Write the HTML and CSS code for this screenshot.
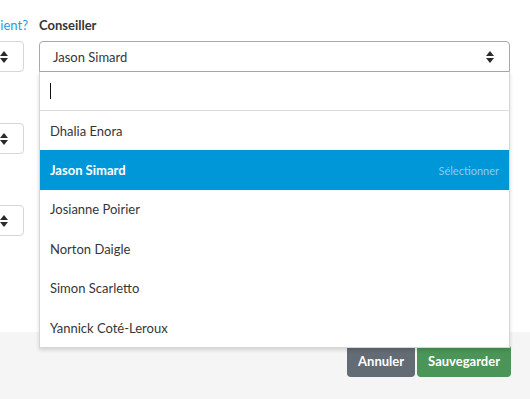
FILE: index.html
```html
<!DOCTYPE html>
<html lang="fr">
<head>
    <meta charset="UTF-8">
    <meta name="viewport" content="width=device-width, initial-scale=1.0">
    <title>Modifier le dossier</title>
    <link rel="stylesheet" href="styles.css">
</head>
<body>
    <div class="modal">
        <div class="modal-body">
            <div class="col col-left">
                <div class="field">
                    <label class="label label-link">Référé par un client?</label>
                    <div class="select"><span class="select-value"></span><span class="sort-icon"></span></div>
                </div>
                <div class="field">
                    <label class="label">&nbsp;</label>
                    <div class="select"><span class="select-value"></span><span class="sort-icon"></span></div>
                </div>
                <div class="field">
                    <label class="label">&nbsp;</label>
                    <div class="select"><span class="select-value"></span><span class="sort-icon"></span></div>
                </div>
            </div>

            <div class="col col-right">
                <div class="field">
                    <label class="label">Conseiller</label>
                    <div class="select select-open">
                        <span class="select-value">Jason Simard</span>
                        <span class="sort-icon"></span>
                        <div class="dropdown">
                            <div class="dropdown-search"><span class="caret"></span></div>
                            <ul class="options">
                                <li class="option">Dhalia Enora</li>
                                <li class="option highlighted">Jason Simard <span class="hint">Sélectionner</span></li>
                                <li class="option">Josianne Poirier</li>
                                <li class="option">Norton Daigle</li>
                                <li class="option">Simon Scarletto</li>
                                <li class="option">Yannick Coté-Leroux</li>
                            </ul>
                        </div>
                    </div>
                </div>
            </div>
        </div>

        <div class="modal-footer">
            <button class="btn btn-cancel">Annuler</button>
            <button class="btn btn-save">Sauvegarder</button>
        </div>
    </div>
</body>
</html>
```

FILE: styles.css
```css
body {
    margin: 0;
    font-family: Lato, "Open Sans", Arial, sans-serif;
    font-size: 13px;
    color: #363636;
    background-color: white;
    overflow: hidden;
}

.modal {
    width: 530px;
    height: 399px;
    display: flex;
    flex-direction: column;
}

.modal-body {
    flex: 1;
    min-height: 0;
    display: flex;
    gap: 15px;
    padding-top: 15px;
}

.col-left {
    width: 200px;
    margin-left: -176px;
    flex-shrink: 0;
}

.col-right {
    width: 471px;
}

.field {
    margin-bottom: 25px;
}

.label {
    display: block;
    height: 26px;
    font-weight: bold;
    line-height: 20px;
    white-space: nowrap;
}

.label-link {
    color: #1a9ee0;
    font-weight: normal;
    text-align: right;
    margin-right: -4px;
}

.select {
    position: relative;
    height: 29px;
    border: 1px solid #d6d6d6;
    border-radius: 4px;
    display: flex;
    align-items: center;
    padding: 0 12px 0 13px;
}

.select-value {
    flex: 1;
}

.select-open {
    border-color: #a8a8a8;
    border-radius: 4px 4px 0 0;
}

.sort-icon {
    width: 8px;
    height: 12px;
    position: relative;
    margin-right: 3px;
}

.sort-icon::before,
.sort-icon::after {
    content: "";
    position: absolute;
    left: 0;
    border-left: 4px solid transparent;
    border-right: 4px solid transparent;
}

.sort-icon::before {
    top: 0;
    border-bottom: 5px solid #2b2b2b;
}

.sort-icon::after {
    bottom: 0;
    border-top: 5px solid #2b2b2b;
}

.dropdown {
    position: absolute;
    top: 30px;
    left: -1px;
    right: -1px;
    background-color: white;
    border: 1px solid #d6d6d6;
    border-top: none;
    box-shadow: 0 2px 4px rgba(0, 0, 0, 0.15);
    z-index: 10;
}

.dropdown-search {
    height: 38px;
    border-bottom: 1px solid #dcdcdc;
    display: flex;
    align-items: center;
    padding-left: 10px;
}

.caret {
    width: 1px;
    height: 16px;
    background-color: #111;
}

.options {
    list-style: none;
    margin: 0;
    padding: 0;
}

.option {
    height: 39.4px;
    display: flex;
    align-items: center;
    justify-content: space-between;
    padding: 0 10px;
}

.option.highlighted {
    background-color: #0097d9;
    color: white;
    font-weight: bold;
}

.hint {
    font-size: 11px;
    color: #8ccbee;
    font-weight: normal;
}

.modal-footer {
    height: 67px;
    flex-shrink: 0;
    background-color: #f5f5f5;
    display: flex;
    justify-content: flex-end;
    align-items: flex-start;
    gap: 2px;
    padding: 13px 19px 0 0;
    box-sizing: border-box;
}

.btn {
    height: 32px;
    border: none;
    border-radius: 4px;
    color: white;
    font-family: inherit;
    font-size: 13px;
    font-weight: bold;
    padding: 0 11px;
    cursor: pointer;
}

.btn-cancel {
    background-color: #636b75;
}

.btn-save {
    background-color: #4a9557;
}
```
